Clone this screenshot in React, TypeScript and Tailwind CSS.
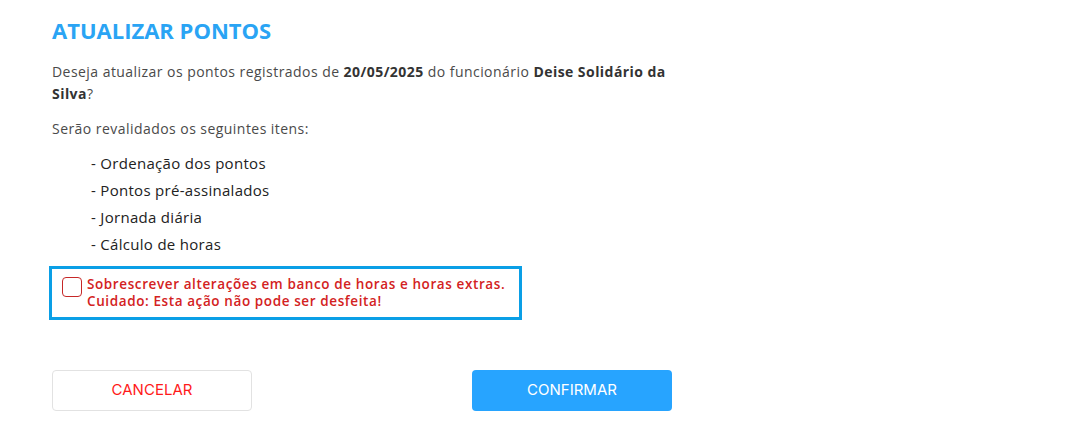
export default function App() {
  const items = ['Ordenação dos pontos', 'Pontos pré-assinalados', 'Jornada diária', 'Cálculo de horas']

  return (
    <div className="min-h-[443px] w-full bg-white font-['Open_Sans',sans-serif]">
      <div className="w-[620px] pl-[52px] pt-[14px] box-content">
        <h1 className="text-[22px] font-bold leading-[33px] text-[#2aa4f4]">ATUALIZAR PONTOS</h1>

        <p className="mt-[14px] text-[14px] leading-[22px] tracking-[0.45px] text-[#4a4a4a]">
          Deseja atualizar os pontos registrados de <b className="text-[#333]">20/05/2025</b> do funcionário{' '}
          <b className="text-[#333]">Deise Solidário da Silva</b>?
        </p>

        <p className="mt-[13px] text-[14px] leading-[22px] tracking-[0.45px] text-[#4a4a4a]">
          Serão revalidados os seguintes itens:
        </p>

        <ul className="mt-[12px] flex flex-col gap-[5px] pl-[39px] text-[15px] leading-[22px] tracking-[0.3px] text-[#222]">
          {items.map((item) => (
            <li key={item}>- {item}</li>
          ))}
        </ul>

        <label className="-ml-[3px] mt-[11px] flex w-[473px] items-start gap-[5px] border-[3px] border-[#0a9fe6] px-[10px] py-[7px]">
          <span className="mt-[1px] h-[20px] w-[20px] shrink-0 rounded-[4px] border border-[#c62828] bg-white" />
          <span className="text-[13.5px] font-semibold leading-[17px] tracking-[0.6px] text-[#d32222]">
            Sobrescrever alterações em banco de horas e horas extras.
            <br />
            Cuidado: Esta ação não pode ser desfeita!
          </span>
        </label>

        <div className="mt-[50px] flex justify-between">
          <button className="h-[41px] w-[200px] rounded-[4px] border border-[#e2e2e2] bg-white font-['Inter',sans-serif] text-[15px] text-[#ff1a1a]">
            CANCELAR
          </button>
          <button className="h-[41px] w-[200px] rounded-[4px] bg-[#27a4ff] font-['Inter',sans-serif] text-[15px] text-white">
            CONFIRMAR
          </button>
        </div>
      </div>
    </div>
  )
}
